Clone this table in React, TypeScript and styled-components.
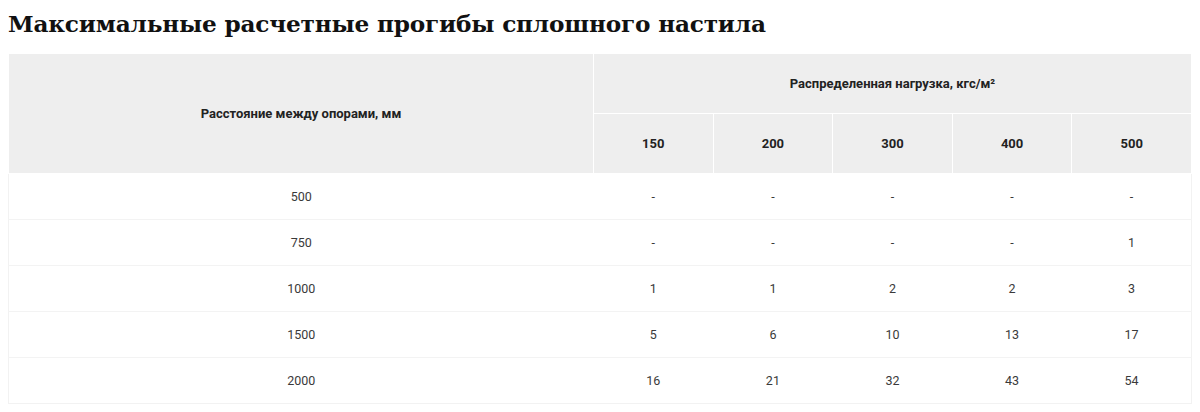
import React from "react";
import styled, { createGlobalStyle } from "styled-components";

const Global = createGlobalStyle`
  html, body { margin: 0; padding: 0; background: #fff; }
  body { padding: 8px; font-family: Roboto, "Liberation Sans", sans-serif; }
`;

const Title = styled.h2`
  margin: 2px 0 15px;
  font-family: "DejaVu Serif", "Liberation Serif", serif;
  font-weight: 700;
  font-size: 23.2px;
  line-height: 28px;
  color: #111;
  letter-spacing: -0.2px;
`;

const Table = styled.table`
  width: 100%;
  table-layout: fixed;
  border-collapse: collapse;
  border: 1px solid #f2f2f2;
  font-size: 13px;
`;

const HeadCell = styled.th<{ $h: number }>`
  background: #eeeeee;
  border: 1px solid #ffffff;
  height: ${(p) => p.$h}px;
  padding: 0 8px;
  font-weight: 700;
  font-size: 13px;
  color: #222;
  text-align: center;
  vertical-align: middle;
`;

const Row = styled.tr`
  border-bottom: 1px solid #f3f3f3;
  &:last-child { border-bottom: none; }
`;

const Cell = styled.td`
  height: 45px;
  padding: 0 8px;
  text-align: center;
  vertical-align: middle;
  color: #3a3a3a;
  font-size: 12.5px;
`;

const loads = ["150", "200", "300", "400", "500"];
const rows: [string, string[]][] = [
  ["500", ["-", "-", "-", "-", "-"]],
  ["750", ["-", "-", "-", "-", "1"]],
  ["1000", ["1", "1", "2", "2", "3"]],
  ["1500", ["5", "6", "10", "13", "17"]],
  ["2000", ["16", "21", "32", "43", "54"]],
];

export default function App() {
  return (
    <>
      <Global />
      <Title>Максимальные расчетные прогибы сплошного настила</Title>
      <Table>
        <colgroup>
          <col style={{ width: 585 }} />
          <col />
          <col />
          <col />
          <col />
          <col />
        </colgroup>
        <thead>
          <tr>
            <HeadCell $h={59} rowSpan={2}>Расстояние между опорами, мм</HeadCell>
            <HeadCell $h={59} colSpan={5}>Распределенная нагрузка, кгс/м²</HeadCell>
          </tr>
          <tr>
            {loads.map((l) => (
              <HeadCell $h={59} key={l}>{l}</HeadCell>
            ))}
          </tr>
        </thead>
        <tbody>
          {rows.map(([d, vals]) => (
            <Row key={d}>
              <Cell>{d}</Cell>
              {vals.map((v, i) => (
                <Cell key={i}>{v}</Cell>
              ))}
            </Row>
          ))}
        </tbody>
      </Table>
    </>
  );
}
